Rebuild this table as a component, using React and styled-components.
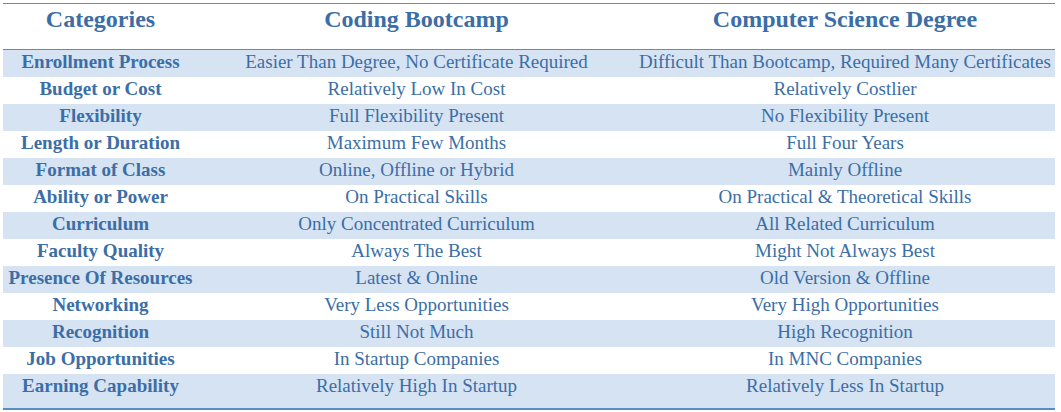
import React from 'react';
import styled, { createGlobalStyle } from 'styled-components';

const Global = createGlobalStyle`
  body {
    margin: 0;
    background: #fff;
    font-family: "Liberation Serif", "Times New Roman", serif;
  }
`;

const Wrap = styled.div`
  padding: 3px 6px 0 3px;
`;

const Table = styled.table`
  width: 1052px;
  border-collapse: collapse;
  table-layout: fixed;
  font-family: "Liberation Serif", "Times New Roman", serif;
  color: #3b6ea6;
  border-top: 1px solid #5b8cc4;
  border-bottom: 2px solid #5b8cc4;
`;

const HeadRow = styled.tr`
  height: 46px;
`;

const Head = styled.th`
  padding: 1px 0 0;
  font-size: 24px;
  line-height: 28px;
  font-weight: bold;
  text-align: center;
  vertical-align: top;
  border-bottom: 1px solid #5b8cc4;
`;

const Row = styled.tr`
  background: ${p => (p.$shaded ? '#d6e3f3' : '#fff')};
  height: ${p => (p.$last ? '35px' : '27px')};
`;

const Cell = styled.td`
  padding: 1px 0 0;
  font-size: 19px;
  line-height: 21px;
  text-align: center;
  vertical-align: top;
  white-space: nowrap;
  font-weight: ${p => (p.$bold ? 'bold' : 'normal')};
`;

const rows = [
  ['Enrollment Process', 'Easier Than Degree, No Certificate Required', 'Difficult Than Bootcamp, Required Many Certificates'],
  ['Budget or Cost', 'Relatively Low In Cost', 'Relatively Costlier'],
  ['Flexibility', 'Full Flexibility Present', 'No Flexibility Present'],
  ['Length or Duration', 'Maximum Few Months', 'Full Four Years'],
  ['Format of Class', 'Online, Offline or Hybrid', 'Mainly Offline'],
  ['Ability or Power', 'On Practical Skills', 'On Practical & Theoretical Skills'],
  ['Curriculum', 'Only Concentrated Curriculum', 'All Related Curriculum'],
  ['Faculty Quality', 'Always The Best', 'Might Not Always Best'],
  ['Presence Of Resources', 'Latest & Online', 'Old Version & Offline'],
  ['Networking', 'Very Less Opportunities', 'Very High Opportunities'],
  ['Recognition', 'Still Not Much', 'High Recognition'],
  ['Job Opportunities', 'In Startup Companies', 'In MNC Companies'],
  ['Earning Capability', 'Relatively High In Startup', 'Relatively Less In Startup'],
];

export default function App() {
  return (
    <Wrap>
      <Global />
      <Table>
        <colgroup>
          <col style={{ width: 195 }} />
          <col style={{ width: 437 }} />
          <col />
        </colgroup>
        <thead>
          <HeadRow>
            <Head>Categories</Head>
            <Head>Coding Bootcamp</Head>
            <Head>Computer Science Degree</Head>
          </HeadRow>
        </thead>
        <tbody>
          {rows.map((r, i) => {
            const last = i === rows.length - 1;
            return (
              <Row key={r[0]} $shaded={i % 2 === 0} $last={last}>
                <Cell $bold>{r[0]}</Cell>
                <Cell>{r[1]}</Cell>
                <Cell>{r[2]}</Cell>
              </Row>
            );
          })}
        </tbody>
      </Table>
    </Wrap>
  );
}
